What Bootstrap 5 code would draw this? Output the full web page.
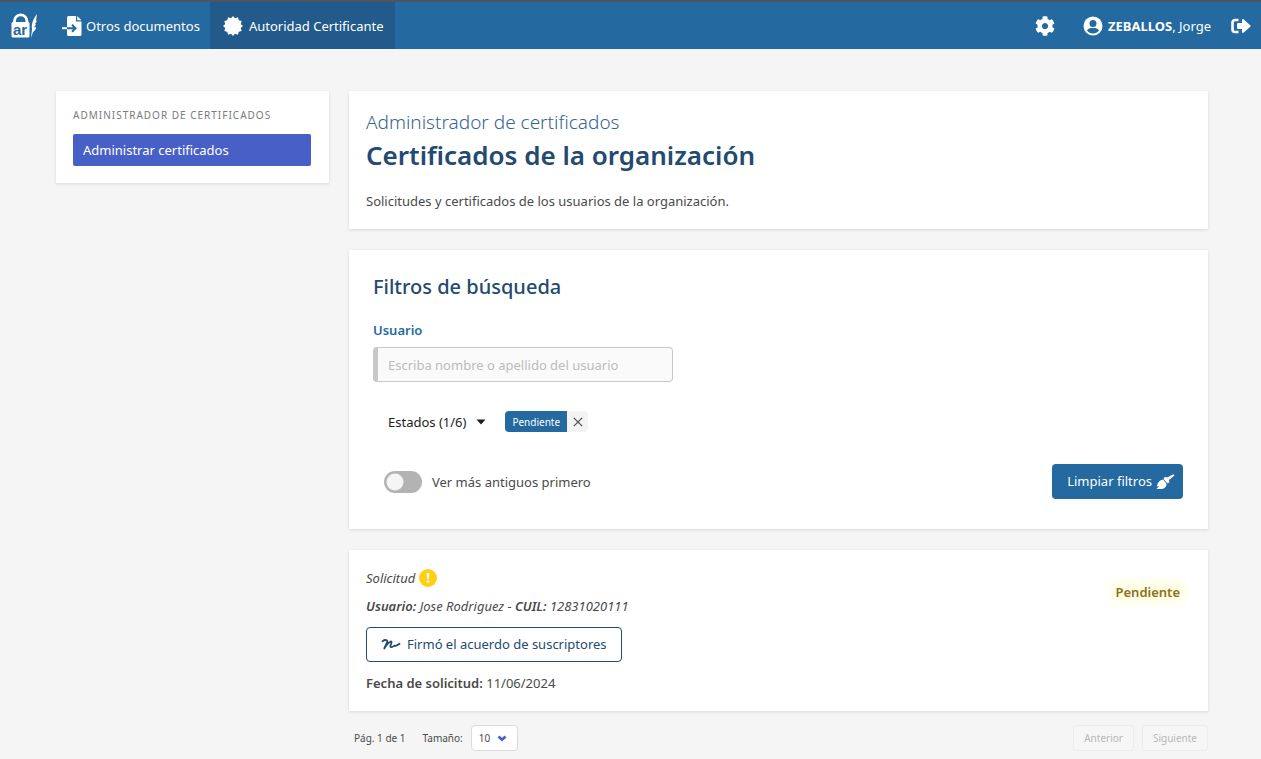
<!DOCTYPE html>
<html lang="es">
<head>
<meta charset="utf-8">
<meta name="viewport" content="width=device-width, initial-scale=1">
<title>Certificados de la organización</title>
<link href="https://cdn.jsdelivr.net/npm/bootstrap@5.3.0/dist/css/bootstrap.min.css" rel="stylesheet">
<style>
  body { font-family: "Noto Sans", "Open Sans", sans-serif; font-size: 13px; line-height: 20px; color: #4a4a4a; background: #f5f5f5; }
  svg { display: block; flex: none; fill: currentColor; }
  b, strong { font-weight: 600; }
  .topbar { border-top: 2px solid #4c5560; background: #24699f; min-height: 49px; padding: 0; }
  .topbar .nav-link, .topbar .navbar-brand { color: #fff; height: 47px; font-size: 13px; padding: 0 10px; margin: 0; }
  .topbar .nav-link.active { background: #215a8b; color: #fff; padding: 0 11px; }
  .user-link { gap: 5px; }
  .user-link b { font-weight: 700; }
  .page-area { padding: 42px 43px 8px 46px; }
  .page-area > .row { --bs-gutter-x: 20px; margin: 0; }
  .panel { background: #fff; box-shadow: 0 1px 3px rgba(10,10,10,.12); }
  .side-panel { padding: 16px 18px 17px 17px; }
  .side-label { font-size: 10px; line-height: 16px; letter-spacing: 1px; color: #7a7a7a; text-transform: uppercase; margin: 0 0 11px; }
  .side-link { display: block; height: 32px; padding: 6px 10px; border-radius: 2px; background: #485fc7; color: #fff; text-decoration: none; }
  .head-panel { padding: 18px 17px; margin-bottom: 21px; }
  .page-kicker { font-size: 19px; line-height: 26px; font-weight: 300; color: #3a6492; margin: 0; }
  .page-title { font-size: 26px; line-height: 34px; font-weight: 600; color: #234a70; margin: 3px 0 19px; }
  .filter-panel { padding: 24px 25px 30px 24px; margin-bottom: 21px; }
  .section-title { font-size: 20px; line-height: 26px; font-weight: 500; color: #234a70; margin: 0 0 20px; }
  .field-label { display: block; font-weight: 600; color: #24699f; margin-bottom: 7px; }
  .user-field { width: 300px; max-width: 100%; height: 35px; border: 1px solid #c8c8c8; border-left: 5px solid #c8c8c8; border-radius: 4px; background: #fafafa; font-size: 13px; padding: 0 10px; }
  .user-field::placeholder { color: #bcbcbc; }
  .state-row { padding: 29px 15px 32px; }
  .state-btn { border: 0; background: none; padding: 0; margin-right: 19px; color: #1c1c1c; gap: 10px; }
  .tag-name { height: 21px; padding: 0 7px; border-radius: 4px 0 0 4px; background: #24699f; color: #fff; font-size: 10px; }
  .tag-x { width: 21px; height: 21px; padding: 0; border: 0; border-radius: 0 4px 4px 0; background: #f4f4f4; color: #4a4a4a; }
  .switch-line.form-switch { min-height: 22px; padding-left: 11px; gap: 10px; }
  .form-switch .form-check-input.old-first { width: 38px; height: 22px; margin: 0; border: 0; background-color: #b3b3b3; --bs-form-switch-bg: url("data:image/svg+xml,%3csvg xmlns='http://www.w3.org/2000/svg' viewBox='-4 -4 8 8'%3e%3ccircle r='3.1' fill='%23f5f5f5'/%3e%3c/svg%3e"); background-image: var(--bs-form-switch-bg); }
  .btn-clean { height: 35px; padding: 0 8px 0 15px; border: 0; border-radius: 4px; background: #24699f; color: #fff; font-size: 13px; gap: 4px; }
  .btn-clean:hover { background: #215a8b; color: #fff; }
  .request-panel { padding: 18px 28px 18px 17px; }
  .request-user { margin: 0 0 11px; }
  .btn-signed { height: 35px; padding: 0 14px; border: 1px solid #234a70; border-radius: 4px; background: #fff; color: #234a70; font-size: 13px; gap: 6px; }
  .date-line { margin: 11px 0 0; }
  .state-glow { margin-top: 18px; background: #fffee2; box-shadow: 0 0 8px 5px #fffee2; color: #8c711f; font-weight: 600; line-height: 12px; }
  .pager { font-size: 10px; height: 26px; margin-top: 14px; gap: 8px; padding-left: 5px; }
  .page-count { margin-right: 9px; }
  .size-box { width: 47px; height: 26px; padding: 0 7px; font-size: 10px; border: 1px solid #dbdbdb; border-radius: 4px; background-color: #fff; color: #4a4a4a; background-image: url("data:image/svg+xml,%3csvg xmlns='http://www.w3.org/2000/svg' viewBox='0 0 10 7'%3e%3cpath d='M1.5 1.5 5 4.8 8.5 1.5' fill='none' stroke='%23485fc7' stroke-width='2.6'/%3e%3c/svg%3e"); background-size: 10px 7px; background-position: right 10px center; }
  .btn-page, .btn-page:disabled { height: 26px; padding: 0 10px; font-size: 10px; border: 1px solid #ececec; border-radius: 3px; background: #f6f6f6; color: #b8b8b8; opacity: 1; }
</style>
</head>
<body>
<nav class="topbar d-flex align-items-center" aria-label="Principal">
  <a class="navbar-brand d-flex align-items-center me-1" href="#" aria-label="Inicio">
    <svg width="28" height="26" viewBox="0 0 28 26">
      <path d="M4.500 10V8a6.200 6.200 0 0 1 12.400 0V10" fill="none" stroke="#fff" stroke-width="2.800"/>
      <path d="M3 9h15q1.500 0 1.500 1.500V23q0 1.500-1.500 1.500H3Q1.500 24.500 1.500 23V10.500Q1.500 9 3 9z"/>
      <text x="10" y="22" text-anchor="middle" font-family="Liberation Sans, sans-serif" font-weight="700" font-size="15" fill="#24699f">ar</text>
      <path d="M27 1c-3 4-6 9-5 15l-1 9 2-6c3-2 3-4 3-5l-2 .5 2-3-1-.5 2-3-1-.5z"/>
    </svg>
  </a>
  <a class="nav-link d-flex align-items-center gap-1" href="#">
    <svg width="20" height="20" viewBox="0 0 20 20">
      <path d="M5 1.500A1.500 1.500 0 0 1 6.500 0H14v5.500h5.500v13A1.500 1.500 0 0 1 18 20H6.500A1.500 1.500 0 0 1 5 18.500zM15.200 0l4.300 4.300h-4.300z"/>
      <path d="M0 11.200h5v2H0z"/>
      <path d="M5 12.200h8M10 8.700l3.500 3.500L10 15.700" fill="none" stroke="#24699f" stroke-width="2"/>
    </svg>
    <span>Otros documentos</span>
  </a>
  <a class="nav-link active d-flex align-items-center gap-1" href="#">
    <svg width="24" height="22" viewBox="-12 -11 24 22">
      <circle r="8"/>
      <path d="M0-10 2-7.700 5-8.700 5.700-5.700 8.700-5 7.700-2 10 0 7.700 2 8.700 5 5.700 5.700 5 8.700 2 7.700 0 10-2 7.700-5 8.700-5.700 5.700-8.700 5-7.700 2-10 0-7.700-2-8.700-5-5.700-5.700-5-8.700-2-7.700z"/>
    </svg>
    <span>Autoridad Certificante</span>
  </a>
  <a class="nav-link d-flex align-items-center ms-auto me-2" href="#" aria-label="Configuración">
    <svg width="20" height="20" viewBox="0 0 512 512"><path d="M487.400 315.700l-42.600-24.600c4.300-23.200 4.300-47 0-70.200l42.600-24.600c4.900-2.800 7.100-8.600 5.500-14-11.100-35.600-30-67.800-54.700-94.600-3.800-4.100-10-5.100-14.800-2.300L380.800 110c-17.900-15.400-38.500-27.300-60.800-35.100V25.800c0-5.600-3.900-10.500-9.400-11.700-36.700-8.200-74.300-7.800-109.200 0-5.500 1.200-9.400 6.100-9.400 11.700V75c-22.200 7.900-42.800 19.800-60.800 35.100L88.700 85.500c-4.900-2.800-11-1.900-14.800 2.300-24.700 26.700-43.600 58.900-54.700 94.600-1.700 5.400.6 11.200 5.500 14L67.300 221c-4.300 23.200-4.300 47 0 70.200l-42.600 24.600c-4.900 2.800-7.100 8.600-5.500 14 11.100 35.600 30 67.800 54.700 94.600 3.800 4.100 10 5.100 14.800 2.300l42.600-24.600c17.900 15.400 38.500 27.300 60.800 35.100v49.200c0 5.600 3.900 10.500 9.400 11.700 36.700 8.200 74.300 7.800 109.200 0 5.500-1.200 9.400-6.100 9.400-11.700v-49.200c22.200-7.900 42.800-19.800 60.800-35.100l42.600 24.600c4.900 2.800 11 1.900 14.800-2.300 24.700-26.700 43.600-58.900 54.700-94.600 1.500-5.500-.7-11.300-5.600-14.100zM256 336c-44.100 0-80-35.900-80-80s35.900-80 80-80 80 35.900 80 80-35.900 80-80 80z"/></svg>
  </a>
  <a class="nav-link user-link d-flex align-items-center" href="#">
    <svg width="20" height="20" viewBox="0 0 20 20"><circle cx="10" cy="10" r="9.500"/><circle cx="10" cy="7.500" r="3.500" fill="#24699f"/><path d="M4 14.500c1-2 3-2.500 6-2.500s5 .5 6 2.500c-1.500 2-3.500 3-6 3s-4.500-1-6-3z" fill="#24699f"/></svg>
    <span><b>ZEBALLOS</b>, Jorge</span>
  </a>
  <a class="nav-link d-flex align-items-center" href="#" aria-label="Salir">
    <svg width="20" height="16" viewBox="0 0 20 16"><path d="M7.500 2H4a2.500 2.500 0 0 0-2.500 2.500v7A2.500 2.500 0 0 0 4 14h3.500" fill="none" stroke="#fff" stroke-width="2.600"/><path d="M6 6.200q0-1.200 1.200-1.200H11V2q.4-1.600 1.800-.6L19.500 7.500q.4.500 0 1l-6.700 6.100Q11.400 15.600 11 14v-3H7.200Q6 11 6 9.800z"/></svg>
  </a>
</nav>

<main class="page-area">
  <div class="row">
    <aside class="col-3">
      <div class="panel side-panel">
        <p class="side-label">Administrador de certificados</p>
        <a class="side-link" href="#">Administrar certificados</a>
      </div>
    </aside>
    <div class="col-9">
      <header class="panel head-panel">
        <p class="page-kicker">Administrador de certificados</p>
        <h1 class="page-title">Certificados de la organización</h1>
        <p class="mb-0">Solicitudes y certificados de los usuarios de la organización.</p>
      </header>

      <section class="panel filter-panel">
        <h2 class="section-title">Filtros de búsqueda</h2>
        <label class="field-label" for="usuario">Usuario</label>
        <input class="form-control user-field" id="usuario" type="text" placeholder="Escriba nombre o apellido del usuario">
        <div class="state-row d-flex align-items-center">
          <button class="state-btn d-flex align-items-center" type="button">Estados (1/6)
            <svg width="10" height="6" viewBox="0 0 10 6"><path d="M.5.5h9L5 5.500z"/></svg>
          </button>
          <span class="tag-name d-flex align-items-center">Pendiente</span>
          <button class="tag-x d-flex align-items-center justify-content-center" type="button" aria-label="Quitar Pendiente">
            <svg width="10" height="10" viewBox="0 0 10 10"><path d="M.8.8l8.400 8.400M9.200.8L.8 9.200" stroke="currentColor" stroke-width="1.200"/></svg>
          </button>
        </div>
        <div class="d-flex align-items-center justify-content-between">
          <div class="form-check form-switch d-flex align-items-center m-0 switch-line">
            <input class="form-check-input old-first" type="checkbox" role="switch" id="antiguos">
            <label for="antiguos">Ver más antiguos primero</label>
          </div>
          <button class="btn btn-clean d-flex align-items-center" type="button">Limpiar filtros
            <svg width="19" height="16" viewBox="0 0 19 16"><path d="M17.400.3l1.100 1.300-5.600 4.500.6 2.300-2.300.9-3.700-4.400 1.300-2.100 2.300.8zM7 5.500l3.700 4.400c-.6 3.200-2.500 5-5.500 5H.5l2.500-2.800-2.200.3C1.600 8.500 3.500 6 7 5.500z"/></svg>
          </button>
        </div>
      </section>

      <article class="panel request-panel d-flex justify-content-between align-items-start">
        <div>
          <p class="mb-2 d-flex align-items-center gap-1"><em>Solicitud</em>
            <svg width="18" height="18" viewBox="0 0 18 18"><circle cx="9" cy="9" r="9" fill="#ffcf14"/><path d="M7.700 4h2.600l-.4 6H8.100z" fill="#fff"/><circle cx="9" cy="12.600" r="1.400" fill="#fff"/></svg>
          </p>
          <p class="request-user"><em><b>Usuario:</b> Jose Rodriguez - <b>CUIL:</b> 12831020111</em></p>
          <button class="btn btn-signed d-flex align-items-center" type="button">
            <svg width="20" height="14" viewBox="0 0 20 14"><path d="M1.500 3.200C4 1.500 7 1.500 6.200 4.200L3.300 10.500C5.500 6.500 9.500 2.500 10.500 3.700c.8 1.200-2.600 5.200-.4 5.500 1.400.1 2-.9 3.200-1.500.6-.2.700.4 1.700 0 1-.4 2-1.300 3.500-1.900" fill="none" stroke="currentColor" stroke-width="1.800" stroke-linecap="round" stroke-linejoin="round"/></svg>
            Firmó el acuerdo de suscriptores
          </button>
          <p class="date-line"><b>Fecha de solicitud:</b> 11/06/2024</p>
        </div>
        <span class="state-glow">Pendiente</span>
      </article>

      <div class="pager d-flex align-items-center">
        <span class="page-count">Pág. 1 de 1</span>
        <label for="tamano">Tamaño:</label>
        <select class="form-select size-box" id="tamano"><option>10</option><option>20</option><option>50</option></select>
        <button class="btn btn-page ms-auto" type="button" disabled>Anterior</button>
        <button class="btn btn-page" type="button" disabled>Siguiente</button>
      </div>
    </div>
  </div>
</main>
<script src="https://cdn.jsdelivr.net/npm/bootstrap@5.3.0/dist/js/bootstrap.bundle.min.js"></script>
</body>
</html>
